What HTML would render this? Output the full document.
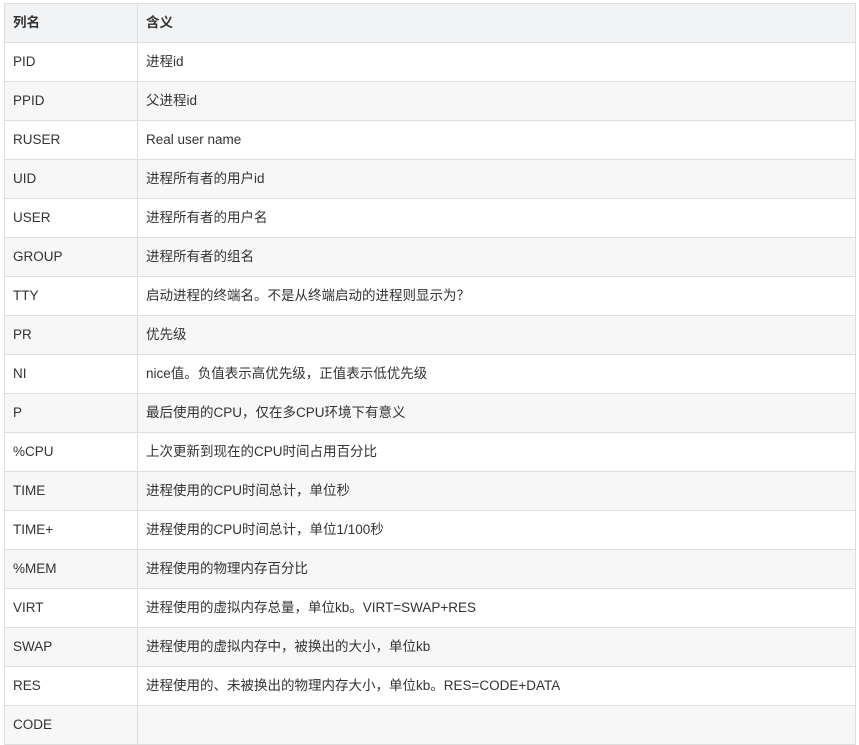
<!DOCTYPE html><html><head><style>
body{margin:0;background:#fff;font-family:"Liberation Sans","Noto Sans CJK SC",sans-serif;font-size:13.5px;color:#333}
table{position:absolute;left:4px;top:3px;width:852px;border-collapse:collapse;table-layout:fixed}
tr{height:39px}
td,th{border:1px solid #ddd;padding:0 0 0 8px;text-align:left;line-height:20px;vertical-align:middle;white-space:nowrap;overflow:hidden}
th{background:#f1f3f5;font-weight:bold}
td:first-child,th:first-child{width:124px}
tr:nth-child(even) td{background:#f7f7f7}
</style></head><body><table>
<thead><tr><th>列名</th><th>含义</th></tr></thead><tbody>
<tr><td>PID</td><td>进程id</td></tr>
<tr><td>PPID</td><td>父进程id</td></tr>
<tr><td>RUSER</td><td>Real user name</td></tr>
<tr><td>UID</td><td>进程所有者的用户id</td></tr>
<tr><td>USER</td><td>进程所有者的用户名</td></tr>
<tr><td>GROUP</td><td>进程所有者的组名</td></tr>
<tr><td>TTY</td><td>启动进程的终端名。不是从终端启动的进程则显示为？</td></tr>
<tr><td>PR</td><td>优先级</td></tr>
<tr><td>NI</td><td>nice值。负值表示高优先级，正值表示低优先级</td></tr>
<tr><td>P</td><td>最后使用的CPU，仅在多CPU环境下有意义</td></tr>
<tr><td>%CPU</td><td>上次更新到现在的CPU时间占用百分比</td></tr>
<tr><td>TIME</td><td>进程使用的CPU时间总计，单位秒</td></tr>
<tr><td>TIME+</td><td>进程使用的CPU时间总计，单位1/100秒</td></tr>
<tr><td>%MEM</td><td>进程使用的物理内存百分比</td></tr>
<tr><td>VIRT</td><td>进程使用的虚拟内存总量，单位kb。VIRT=SWAP+RES</td></tr>
<tr><td>SWAP</td><td>进程使用的虚拟内存中，被换出的大小，单位kb</td></tr>
<tr><td>RES</td><td>进程使用的、未被换出的物理内存大小，单位kb。RES=CODE+DATA</td></tr>
<tr><td>CODE</td><td></td></tr>
</tbody></table></body></html>
